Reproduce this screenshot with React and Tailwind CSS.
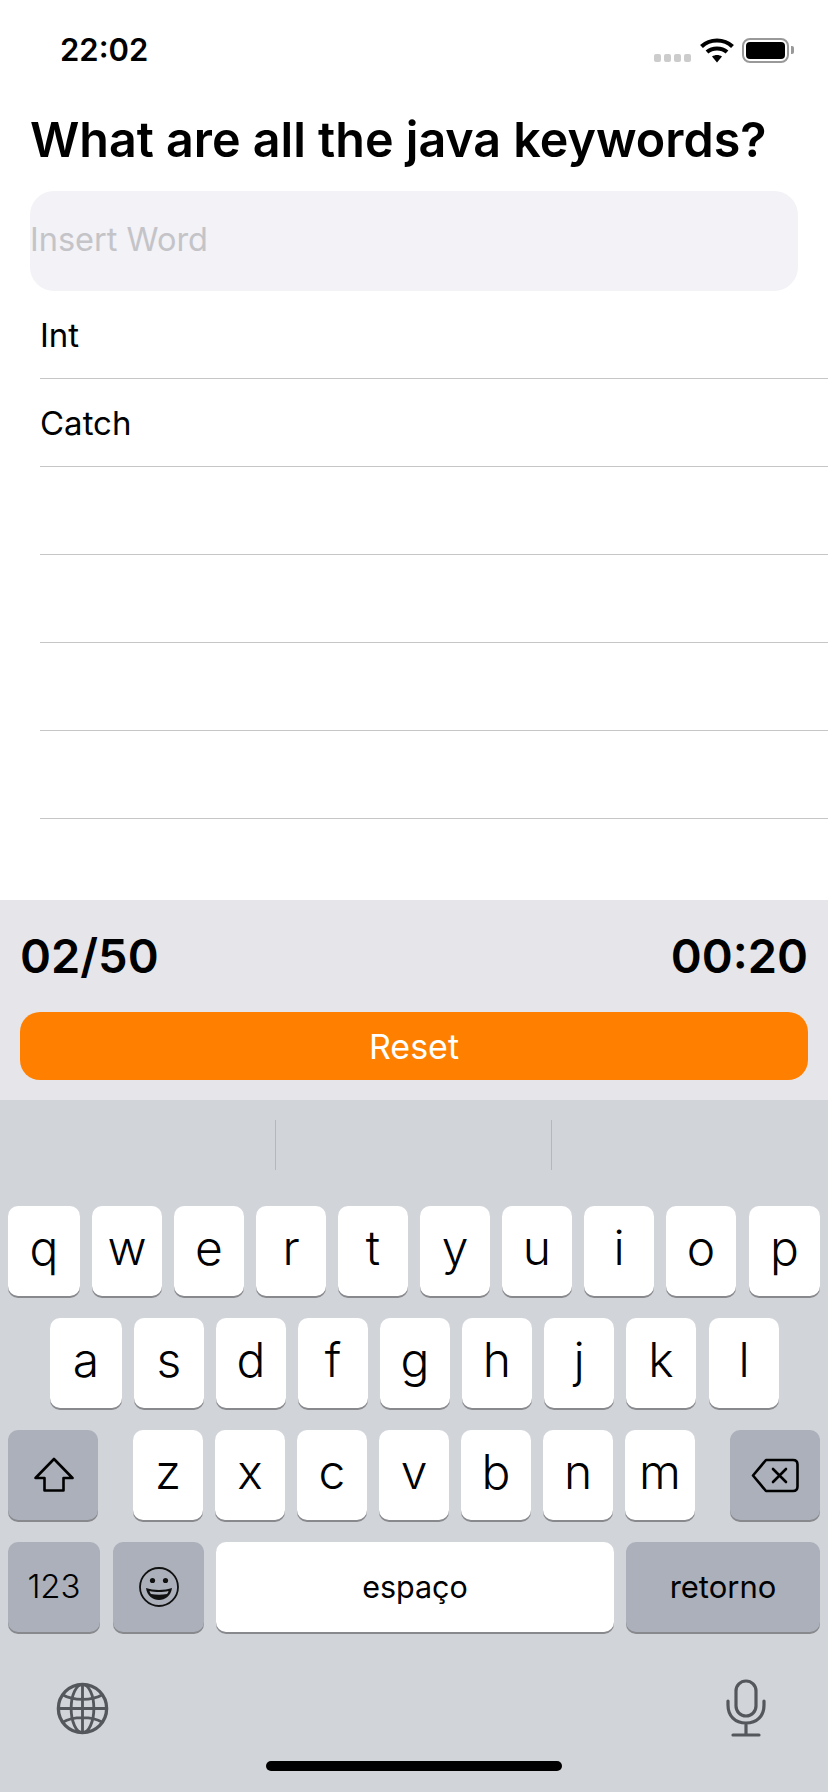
const words = ["Int", "Catch", "", "", "", ""];
const rowOne = ["q", "w", "e", "r", "t", "y", "u", "i", "o", "p"];
const rowTwo = ["a", "s", "d", "f", "g", "h", "j", "k", "l"];
const rowThree = ["z", "x", "c", "v", "b", "n", "m"];

function Key({ label, className = "w-[70px]" }) {
  return (
    <div
      className={`h-[90px] rounded-[10px] bg-white shadow-[0_2px_0_#88898d] flex items-center justify-center text-[48px] font-light leading-none pb-[6px] text-black ${className}`}
    >
      {label}
    </div>
  );
}

function GreyKey({ children, className = "w-[90px]" }) {
  return (
    <div
      className={`h-[90px] rounded-[10px] bg-[#abb0ba] shadow-[0_2px_0_#88898d] flex items-center justify-center text-black ${className}`}
    >
      {children}
    </div>
  );
}

function StatusIcons() {
  return (
    <div className="flex items-center">
      <div className="flex gap-[3px] mt-[15px]">
        {[0, 1, 2, 3].map((i) => (
          <div key={i} className="w-[7px] h-[8px] rounded-[2px] bg-[#cccccc]" />
        ))}
      </div>
      <svg width="34" height="25" viewBox="0 0 34 25" className="ml-[9px]">
        <path d="M1.5 8.5C10 .5 24 .5 32.500 8.500" fill="none" stroke="#000" strokeWidth="4.200" />
        <path d="M7 14C12.500 9.300 21.500 9.300 27 14" fill="none" stroke="#000" strokeWidth="4.200" />
        <path d="M12 18.500C15 16.500 19 16.500 22 18.500L17 24.500Z" fill="#000" />
      </svg>
      <div className="ml-[8px] w-[47px] h-[25px] rounded-[8px] border-2 border-[#999999] p-[2px]">
        <div className="w-full h-full rounded-[4px] bg-black" />
      </div>
      <div className="w-[3px] h-[8px] ml-[2px] rounded-r-[2px] bg-[#999999]" />
    </div>
  );
}

function Smiley() {
  return (
    <svg width="42" height="42" viewBox="0 0 42 42">
      <circle cx="21" cy="21" r="19" fill="none" stroke="#111" strokeWidth="1.800" />
      <circle cx="14.500" cy="14.500" r="2.600" fill="#111" />
      <circle cx="27.500" cy="14.500" r="2.600" fill="#111" />
      <path d="M8 22C15 24.500 27 24.500 34 22C33 30 27 34 21 34C15 34 9 30 8 22Z" fill="#111" />
      <path d="M11.500 25C17 26.300 25 26.300 30.500 25C30 27 29.500 27.500 29 28C24 29 18 29 13 28C12.500 27.500 12 27 11.500 25Z" fill="#abb0ba" />
    </svg>
  );
}

export default function App() {
  return (
    <div className="w-[828px] h-[1792px] flex flex-col bg-white overflow-hidden font-['Inter',sans-serif]">
      {/* status bar */}
      <div className="h-[100px] flex items-center justify-between pl-[60px] pr-[34px]">
        <span className="text-[31px] font-semibold text-black">22:02</span>
        <StatusIcons />
      </div>

      <h1 className="h-[91px] pl-[30px] text-[48.4px] leading-[80px] font-semibold text-black whitespace-nowrap">
        What are all the java keywords?
      </h1>

      <div className="px-[30px]">
        <input
          readOnly
          placeholder="Insert Word"
          className="w-full h-[100px] pb-[4px] rounded-[24px] bg-[#f2f2f7] text-[32.5px] outline-none placeholder:text-[#c4c4c8]"
        />
      </div>

      <div className="pl-[40px]">
        {words.map((word, i) => (
          <div
            key={i}
            className="h-[88px] pt-[2px] flex items-center border-b border-[#c6c6c8] text-[33px] text-black"
          >
            {word}
          </div>
        ))}
      </div>

      <div className="flex-1" />

      {/* score + reset */}
      <div className="h-[200px] bg-[#e5e5ea] px-[20px] flex flex-col">
        <div className="h-[112px] flex items-center justify-between text-[47px] font-semibold text-black">
          <span>02/50</span>
          <span>00:20</span>
        </div>
        <button className="h-[68px] rounded-[20px] bg-[#ff8000] text-white text-[34px]">
          Reset
        </button>
      </div>

      {/* keyboard */}
      <div className="h-[692px] bg-[#d1d4d9] flex flex-col">
        <div className="h-[106px] pt-[20px] flex">
          <div className="w-[276px] h-[50px] border-r border-[#b4b7bc]" />
          <div className="w-[276px] h-[50px] border-r border-[#b4b7bc]" />
        </div>

        <div className="flex flex-col gap-[22px]">
          <div className="flex gap-[12px] pl-[8px]">
            {rowOne.map((k) => (
              <Key
                key={k}
                label={k}
                className={k === "q" ? "w-[72px]" : k === "p" ? "w-[71px] ml-[1px]" : "w-[70px]"}
              />
            ))}
          </div>

          <div className="flex gap-[12px] pl-[50px]">
            {rowTwo.map((k) => (
              <Key
                key={k}
                label={k}
                className={k === "a" ? "w-[72px]" : k === "l" ? "w-[70px] ml-[1px]" : "w-[70px]"}
              />
            ))}
          </div>

          <div className="flex justify-between px-[8px]">
            <GreyKey>
              <svg width="40" height="36" viewBox="0 0 40 36" fill="none" stroke="#000" strokeWidth="2.600" strokeLinejoin="round" className="ml-[1px]">
                <path d="M20 2L38.500 21H29.500V33.500H10.500V21H1.500Z" />
              </svg>
            </GreyKey>
            <div className="flex gap-[12px]">
              {rowThree.map((k) => (
                <Key key={k} label={k} />
              ))}
            </div>
            <GreyKey>
              <svg width="48" height="35" viewBox="0 0 48 35" fill="none" stroke="#000" strokeWidth="2.600" strokeLinejoin="round" strokeLinecap="round">
                <path d="M15 2H42C45 2 46.500 3.500 46.500 6.500V28.500C46.500 31.500 45 33 42 33H15L2 17.500Z" />
                <path d="M22 11L35 24M35 11L22 24" />
              </svg>
            </GreyKey>
          </div>

          <div className="flex gap-[12px] px-[8px]">
            <GreyKey className="w-[92px] text-[33px] font-light">123</GreyKey>
            <GreyKey className="w-[91px] ml-[1px]">
              <Smiley />
            </GreyKey>
            <div className="w-[398px] h-[90px] rounded-[10px] bg-white shadow-[0_2px_0_#88898d] flex items-center justify-center text-[30.5px] text-black">
              espaço
            </div>
            <GreyKey className="w-[194px] text-[31px]">retorno</GreyKey>
          </div>
        </div>

        <div className="mt-[47px] flex justify-between items-center pl-[56px] pr-[62px]">
          <svg width="53" height="53" viewBox="0 0 56 56" fill="none" stroke="#54575c" strokeWidth="3">
            <circle cx="28" cy="28" r="25.500" strokeWidth="3.500" />
            <ellipse cx="28" cy="28" rx="12" ry="25.500" />
            <path d="M28 2.500V53.500M2.500 28H53.500M7 13.500C18 20 38 20 49 13.500M7 42.500C18 36 38 36 49 42.500" />
          </svg>
          <svg width="40" height="58" viewBox="0 0 40 58" fill="none" stroke="#54575c" strokeWidth="3.200" strokeLinecap="round">
            <rect x="10" y="2" width="20" height="35" rx="10" />
            <path d="M2 22V26C2 37 9 44 20 44C31 44 38 37 38 26V22M20 44V56M7 56H33" />
          </svg>
        </div>

        <div className="mt-[24px] flex justify-center">
          <div className="w-[296px] h-[10px] rounded-full bg-black" />
        </div>
      </div>
    </div>
  );
}
